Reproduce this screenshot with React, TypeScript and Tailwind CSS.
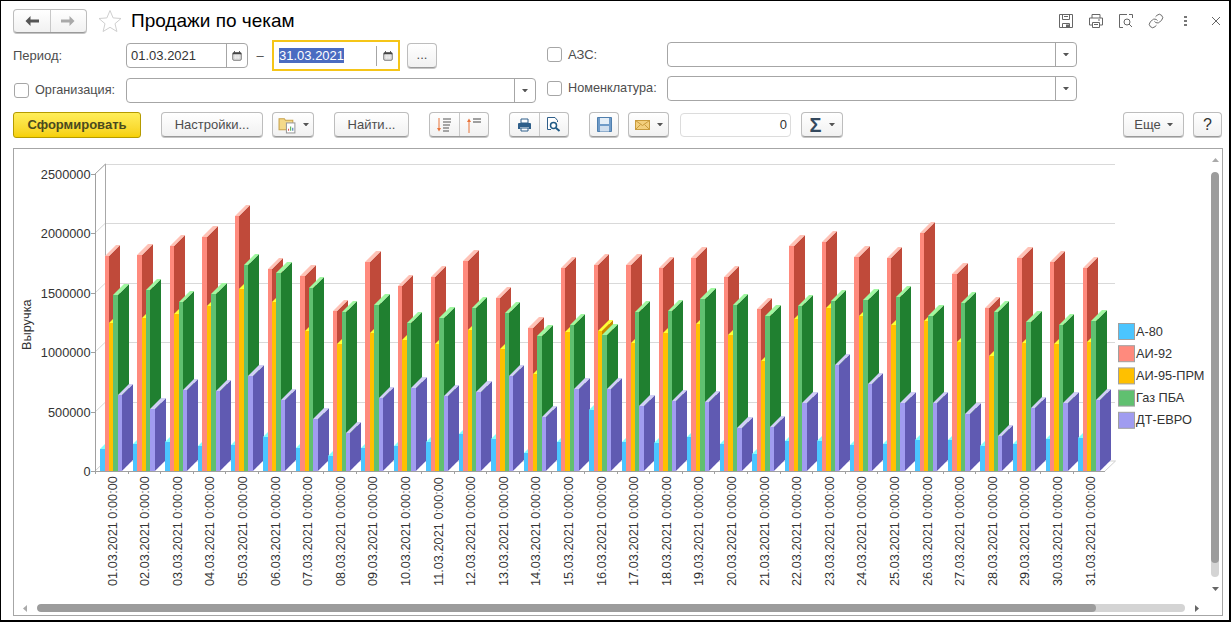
import React from 'react';
import { Link } from 'lucide-react';

const STEP = 32.6;
const START = 100.2;
const BAR = 4.4;
const BASE = 471;
const DEPTH = 11;

// bar heights in px above the baseline, one per day
const series = [
  {
    name: 'А-80',
    front: '#4bc5ff',
    top: '#80ffff',
    side: '#2f8fc0',
    h: [22, 27, 29, 25, 26, 34, 23, 15, 23, 25, 29, 37, 32, 18, 29, 61, 29, 28, 34, 27, 17, 30, 30, 26, 27, 31, 31, 25, 27, 32, 33],
  },
  {
    name: 'АИ-92',
    front: '#ff8a7d',
    top: '#ffc2b6',
    side: '#c04a3a',
    h: [215, 216, 225, 234, 255, 202, 195, 160, 209, 185, 194, 210, 173, 143, 203, 206, 206, 203, 213, 194, 162, 225, 229, 214, 213, 238, 197, 163, 213, 209, 203],
  },
  {
    name: 'АИ-95-ПРМ',
    front: '#ffc000',
    top: '#ffff33',
    side: '#c88a00',
    h: [148, 153, 157, 165, 182, 169, 140, 127, 138, 131, 127, 141, 122, 97, 139, 140, 128, 138, 147, 136, 110, 152, 163, 155, 146, 150, 129, 115, 128, 127, 129],
  },
  {
    name: 'Газ ПБА',
    front: '#60c070',
    top: '#a0f8a0',
    side: '#208030',
    h: [176, 181, 169, 177, 206, 198, 183, 159, 166, 148, 153, 163, 158, 135, 146, 136, 159, 160, 172, 166, 155, 165, 170, 171, 174, 155, 168, 159, 149, 146, 150],
  },
  {
    name: 'ДТ-ЕВРО',
    front: '#a09cf0',
    top: '#d2cff8',
    side: '#605ab2',
    h: [76, 62, 81, 80, 95, 71, 52, 38, 73, 83, 75, 79, 95, 54, 82, 82, 65, 70, 69, 43, 44, 68, 106, 87, 68, 68, 57, 35, 63, 68, 71],
  },
];

const ticks = [
  { label: '2500000', y: 174 },
  { label: '2000000', y: 233 },
  { label: '1500000', y: 293 },
  { label: '1000000', y: 352 },
  { label: '500000', y: 412 },
  { label: '0', y: 471 },
];

const days = Array.from({ length: 31 }, (_, i) => `${String(i + 1).padStart(2, '0')}.03.2021 0:00:00`);

const Chart = () => (
  <svg viewBox="14 149 1196 451" className="block h-[451px] w-[1196px] shrink-0" fontFamily="'Liberation Sans', Arial, sans-serif" fontSize="12.75" fill="#333">
    {/* back wall */}
    {ticks.slice(0, 5).map((t) => (
      <g key={t.label} stroke="#d9d9d9">
        <line x1="105.5" x2="1115" y1={t.y - 9.5} y2={t.y - 9.5} />
        <line x1="95" x2="105.5" y1={t.y} y2={t.y - 10} />
      </g>
    ))}
    <polyline points="95,471 105.5,461 1115.5,461 1105,471" fill="none" stroke="#d0d0d0" />
    <line x1="105.5" x2="105.5" y1="164" y2="461" stroke="#a8a8a8" />
    <line x1="95" x2="105.5" y1="174" y2="164" stroke="#a8a8a8" />

    {/* bars */}
    {days.map((_, d) =>
      series.map((s, j) => {
        const x0 = Math.round(START + d * STEP + j * BAR);
        const x1 = Math.round(START + d * STEP + (j + 1) * BAR);
        const y = BASE - s.h[d];
        return (
          <g key={s.name}>
            <polygon fill={s.side} points={`${x1},${y} ${x1 + DEPTH},${y - DEPTH} ${x1 + DEPTH},${BASE - DEPTH} ${x1},${BASE}`} />
            <polygon fill={s.top} points={`${x0},${y} ${x0 + DEPTH},${y - DEPTH} ${x1 + DEPTH},${y - DEPTH} ${x1},${y}`} />
            <rect fill={s.front} x={x0} y={y} width={x1 - x0} height={s.h[d]} />
            {j === 4 && <line x1={x1} y1={BASE} x2={x1 + DEPTH} y2={BASE - DEPTH} stroke="#c9c6f2" strokeDasharray="1 1" />}
          </g>
        );
      }),
    )}

    {/* axes */}
    <line x1="95.5" x2="95.5" y1="174" y2="472" stroke="#a0a0a0" />
    <line x1="95" x2="1105" y1="471.5" y2="471.5" stroke="#a0a0a0" />
    {ticks.map((t) => (
      <g key={t.label}>
        <line x1="91" x2="95" y1={t.y + 0.5} y2={t.y + 0.5} stroke="#a0a0a0" />
        <text x="90.5" y={t.y + 4.5} textAnchor="end">
          {t.label}
        </text>
      </g>
    ))}
    {days.map((day, d) => (
      <g key={day}>
        <line x1={Math.round(95 + d * STEP) + 0.5} x2={Math.round(95 + d * STEP) + 0.5} y1="472" y2="474" stroke="#a0a0a0" />
        <text transform={`translate(${116.5 + d * STEP} 586) rotate(-90)`}>{day}</text>
      </g>
    ))}
    <text transform="translate(30.5 350) rotate(-90)">Выручка</text>

    {/* legend */}
    {series.map((s, j) => (
      <g key={s.name}>
        <rect x="1118.5" y={323.5 + j * 22.2} width="16" height="16" fill={s.front} stroke="#a0a0a0" />
        <text x="1136" y={335.5 + j * 22.2}>
          {s.name}
        </text>
      </g>
    ))}
  </svg>
);

const Caret = () => (
  <svg width="6" height="3.500" viewBox="0 0 7 4" className="shrink-0">
    <polygon points="0,0 7,0 3.5,4" fill="#555" />
  </svg>
);

const CalendarIcon = () => (
  <svg width="10" height="10" viewBox="0 0 12 12">
    <rect x="1" y="2" width="10" height="9" rx="1" fill="none" stroke="#444" />
    <rect x="1" y="2" width="10" height="2" fill="#444" />
    <path d="M3 0v2M9 0v2" stroke="#444" />
    <path d="M3 6h1M5.500 6h1M8 6h1M3 8.500h1M5.500 8.500h1M8 8.500h1" stroke="#666" />
  </svg>
);

const btn =
  'flex h-[25px] items-center justify-center rounded-[4px] border border-[#bdbdbd] border-b-[#9a9a9a] bg-gradient-to-b from-white to-[#f1f1f1] text-[13px] text-[#4d4d4d] shadow-[0_1px_0_#c4c4c4]';

const Field = ({ className, children }: { className: string; children?: React.ReactNode }) => (
  <div className={`flex items-center rounded-[4px] border border-[#a6a6a6] bg-white ${className}`}>{children}</div>
);

const SelectField = ({ className }: { className: string }) => (
  <Field className={className}>
    <div className="flex-1" />
    <div className="flex h-full w-[21px] items-center justify-center border-l border-[#a6a6a6]">
      <Caret />
    </div>
  </Field>
);

const Checkbox = () => <div className="h-[15px] w-[15px] shrink-0 rounded-[3px] border border-[#a6a6a6] bg-white" />;

const App = () => {
  return (
    <div className="flex h-[622px] w-[1231px] flex-col overflow-hidden border border-r-2 border-b-2 border-black bg-white font-['Liberation_Sans',Arial,sans-serif] text-[13px] text-[#4d4d4d]">
      {/* Header */}
      <div className="flex h-[35px] shrink-0 items-center pl-[12px] pt-[4px]">
        <div className={`${btn} !h-[24px] w-[74px]`}>
          <div className="flex h-full flex-1 items-center justify-center border-r border-[#c8c8c8]">
            <svg width="16" height="12" viewBox="0 0 16 12">
              <path d="M6.500 1 1.500 6l5 5V7.500H15v-3H6.500z" fill="#555" />
            </svg>
          </div>
          <div className="flex h-full flex-1 items-center justify-center">
            <svg width="16" height="12" viewBox="0 0 16 12">
              <path d="M9.500 1l5 5-5 5V7.500H1v-3h8.500z" fill="#a9a9a9" />
            </svg>
          </div>
        </div>
        <svg width="24" height="24" viewBox="0 0 24 24" className="ml-[11px]">
          <path d="M12 1.500l3.100 7.400 7.900.6-6 5.200 1.900 7.800L12 18.300l-6.900 4.200L7 14.700 1 9.500l7.900-.6z" fill="none" stroke="#cfcfcf" />
        </svg>
        <div className="ml-[9px] text-[19px] leading-none text-black">Продажи по чекам</div>
        <div className="ml-auto mr-[8px] flex items-center gap-[14px]">
          <svg width="16" height="16" viewBox="0 0 16 16" fill="none" stroke="#666">
            <path d="M1.500 1.500h13v13h-13zM4.500 1.500v5h7v-5M4.500 14.500v-4h7v4M6 3.500h4" />
            <rect x="8" y="11.500" width="3" height="3" fill="#666" stroke="none" />
          </svg>
          <svg width="16" height="16" viewBox="0 0 16 16" fill="none" stroke="#666">
            <path d="M4 5V1.500h8V5M1.500 5h13v7H12M4 12H1.500V5M4.500 9.500h7v5h-7zM6 11.500h4M10 7h2" />
          </svg>
          <svg width="16" height="16" viewBox="0 0 16 16" fill="none" stroke="#666">
            <path d="M9 1.500H1.500v13H5M11 1.500h3.500V5" />
            <circle cx="9" cy="9" r="3" />
            <path d="M11 11l3 3" />
          </svg>
          <Link size={16} strokeWidth={1.3} color="#555" />
          <div className="ml-[6px] flex w-[4px] flex-col gap-[2px]">
            <div className="h-[2px] w-[3px] bg-[#777]" />
            <div className="h-[2px] w-[3px] bg-[#777]" />
            <div className="h-[2px] w-[3px] bg-[#777]" />
          </div>
          <svg width="10" height="10" viewBox="0 0 10 10" className="ml-[9px]" stroke="#666">
            <path d="M1 1l8 8M9 1L1 9" />
          </svg>
        </div>
      </div>

      {/* Filters */}
      <div className="flex h-[72px] shrink-0 pl-[12px]">
        <div className="flex w-[524px] shrink-0 flex-col pt-[4px]">
          <div className="flex h-[31px] items-center">
            <div className="w-[113px] shrink-0">Период:</div>
            <Field className="h-[25px] w-[122px] shrink-0">
              <div className="flex-1 pl-[4px] text-[#333]">01.03.2021</div>
              <div className="flex h-full w-[21px] items-center justify-center border-l border-[#a6a6a6]">
                <CalendarIcon />
              </div>
            </Field>
            <div className="w-[24px] text-center">–</div>
            <div className="flex h-[31px] w-[128px] shrink-0 items-center border-2 border-[#f5c518] pl-[5px]">
              <div className="flex-1">
                <span className="bg-[#4a6bc1] text-white">31.03.2021</span>
              </div>
              <div className="flex h-[20px] w-[22px] items-center justify-center border-l border-[#a6a6a6]">
                <CalendarIcon />
              </div>
            </div>
            <div className={`${btn} ml-[7px] w-[30px] pb-[2px] text-[11px]`}>...</div>
          </div>
          <div className="mt-[7px] flex h-[25px] items-center">
            <div className="ml-[1px] flex w-[112px] shrink-0 items-center gap-[6px]">
              <Checkbox />
              <span className="text-[12.7px]">Организация:</span>
            </div>
            <SelectField className="h-[25px] w-[410px] shrink-0" />
          </div>
        </div>
        <div className="ml-[10px] flex flex-col pt-[6px]">
          <div className="flex h-[25px] items-center">
            <div className="flex w-[120px] shrink-0 items-center gap-[6px]">
              <Checkbox />
              <span>АЗС:</span>
            </div>
            <SelectField className="h-[25px] w-[410px]" />
          </div>
          <div className="mt-[9px] flex h-[25px] items-center">
            <div className="flex w-[120px] shrink-0 items-center gap-[6px]">
              <Checkbox />
              <span className="text-[12.7px]">Номенклатура:</span>
            </div>
            <SelectField className="h-[25px] w-[410px]" />
          </div>
        </div>
      </div>

      {/* Toolbar */}
      <div className="mt-[4px] flex h-[26px] shrink-0 items-start pl-[12px] pr-[7px]">
        <div className="flex h-[26px] w-[128px] items-center justify-center rounded-[3px] border border-[#b59b00] bg-gradient-to-b from-[#ffee58] to-[#f6d000] text-[13px] font-bold text-[#4a4a1e]">
          Сформировать
        </div>
        <div className={`${btn} ml-[20px] w-[102px]`}>Настройки...</div>
        <div className={`${btn} ml-[9px] w-[42px] gap-[6px]`}>
          <svg width="19" height="19" viewBox="0 0 17 18">
            <path d="M.5 3.500h5l1 1.500h7v9H.5z" fill="#f4d98a" stroke="#c9a24a" />
            <rect x="7.500" y="7.500" width="8" height="9.500" fill="#fff" stroke="#9a9a9a" />
            <path d="M9.500 15v-2" stroke="#d9534f" />
            <path d="M11.500 15v-4" stroke="#4caf50" />
            <path d="M13.500 15v-3" stroke="#3f6fb5" />
          </svg>
          <Caret />
        </div>
        <div className={`${btn} ml-[20px] w-[75px]`}>Найти...</div>
        <div className={`${btn} ml-[20px] w-[60px]`}>
          <div className="flex h-full flex-1 items-center justify-center border-r border-[#c8c8c8]">
            <svg width="16" height="16" viewBox="0 0 16 16">
              <path d="M3 1v12" stroke="#e8743b" />
              <path d="M1 11l2 3.500L5 11z" fill="#e8743b" />
              <path d="M7 2h8M7 5h8M7 8h7M7 11h6M7 14h6" stroke="#555" />
            </svg>
          </div>
          <div className="flex h-full flex-1 items-center justify-center">
            <svg width="16" height="16" viewBox="0 0 16 16">
              <path d="M3 4v12" stroke="#e8743b" />
              <path d="M1 5l2-3.500L5 5z" fill="#e8743b" />
              <path d="M7 2h8M7 5h8" stroke="#444" />
            </svg>
          </div>
        </div>
        <div className={`${btn} ml-[20px] w-[60px]`}>
          <div className="flex h-full flex-1 items-center justify-center border-r border-[#c8c8c8]">
            <svg width="15" height="14" viewBox="0 0 15 14">
              <path d="M4 1h7v4H4z" fill="#fff" stroke="#2f5f8a" />
              <path d="M1 6a1 1 0 0 1 1-1h11a1 1 0 0 1 1 1v5h-2.500V9h-8v2H1z" fill="#2f5f8a" />
              <path d="M4 10h7v3H4z" fill="#fff" stroke="#2f5f8a" />
            </svg>
          </div>
          <div className="flex h-full flex-1 items-center justify-center">
            <svg width="15" height="15" viewBox="0 0 15 15">
              <path d="M9 .5H1.500v12H5M9 .5l2.500 3V5" fill="#fff" stroke="#2f5f8a" />
              <circle cx="7.500" cy="8.500" r="3" fill="#fff" stroke="#1f5a85" strokeWidth="1.500" />
              <path d="M10 11l3.500 3" stroke="#1f5a85" strokeWidth="2" />
            </svg>
          </div>
        </div>
        <div className={`${btn} ml-[20px] w-[30px]`}>
          <svg width="15" height="15" viewBox="0 0 15 15">
            <path d="M.5.5h14v14H.5z" fill="#6f9bc8" stroke="#4f7fae" />
            <rect x="3" y="1" width="9" height="6" fill="#e4eef7" />
            <rect x="3" y="9" width="9" height="5.500" fill="#cfdeee" />
          </svg>
        </div>
        <div className={`${btn} ml-[9px] w-[41px] gap-[7px]`}>
          <svg width="15" height="10" viewBox="0 0 15 10">
            <rect x=".5" y=".5" width="14" height="9" fill="#f3cf7d" stroke="#c99b3c" />
            <path d="M.5.5l7 5 7-5M.5 9.500l5-5M14.500 9.500l-5-5" fill="none" stroke="#c99b3c" />
          </svg>
          <Caret />
        </div>
        <div className="ml-[11px] mt-[1px] flex h-[24px] w-[111px] items-center justify-end rounded-[4px] border border-[#dcdcdc] pr-[3px] text-[#333]">0</div>
        <div className={`${btn} ml-[10px] w-[42px] gap-[7px]`}>
          <span className="text-[20px] font-bold leading-none text-[#34495e]">Σ</span>
          <Caret />
        </div>
        <div className={`${btn} ml-auto w-[61px] gap-[6px]`}>
          <span>Еще</span>
          <Caret />
        </div>
        <div className={`${btn} ml-[9px] w-[29px] text-[16px] text-[#333]`}>?</div>
      </div>

      {/* Chart panel */}
      <div className="ml-[12px] mt-[10px] flex h-[468px] w-[1210px] shrink-0 flex-col border border-[#a6a6a6]">
        <div className="flex h-[451px] shrink-0">
          <Chart />
          <div className="flex w-[10px] flex-col items-center">
            <svg width="7" height="4" viewBox="0 0 7 4" className="mt-[9px] shrink-0">
              <polygon points="3.500,0 7,4 0,4" fill="#aaa" />
            </svg>
            <div className="mt-[10px] h-[405px] w-[8px] shrink-0 overflow-hidden rounded-full bg-[#d4d4d4]">
              <div className="h-[391px] rounded-full bg-[#9c9c9c]" />
            </div>
            <svg width="7" height="4" viewBox="0 0 7 4" className="mt-[10px] shrink-0">
              <polygon points="0,0 7,0 3.500,4" fill="#666" />
            </svg>
          </div>
        </div>
        <div className="mt-[4px] flex h-[8px] shrink-0 items-center pl-[9px]">
          <svg width="4" height="7" viewBox="0 0 4 7">
            <polygon points="4,0 4,7 0,3.500" fill="#aaa" />
          </svg>
          <div className="ml-[10px] h-[8px] w-[1148px] overflow-hidden rounded-full bg-[#d4d4d4]">
            <div className="h-full w-[1059px] rounded-full bg-[#9c9c9c]" />
          </div>
          <svg width="4" height="7" viewBox="0 0 4 7" className="ml-[10px]">
            <polygon points="0,0 0,7 4,3.500" fill="#666" />
          </svg>
        </div>
      </div>
    </div>
  );
};

export default App;
